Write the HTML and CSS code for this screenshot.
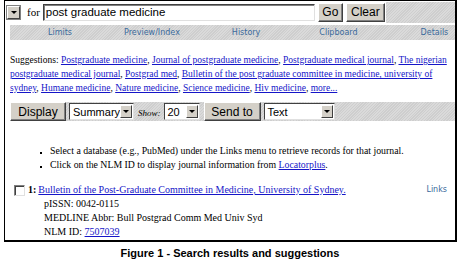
FILE: index.html
```html
<!DOCTYPE html>
<html lang="en">
<head>
    <meta charset="UTF-8">
    <title>Journals search</title>
    <link rel="stylesheet" href="styles.css">
</head>
<body>
    <div class="frame">
        <div class="search-row">
            <span class="db-select"><span class="arrow"></span></span>
            <span class="for-label">for</span>
            <span class="search-input">post graduate medicine</span>
            <span class="btn go-btn">Go</span>
            <span class="btn clear-btn">Clear</span>
            <span class="filler"></span>
        </div>

        <div class="tabs">
            <a class="tab" href="#">Limits</a>
            <a class="tab" href="#">Preview/Index</a>
            <a class="tab" href="#">History</a>
            <a class="tab" href="#">Clipboard</a>
            <a class="tab" href="#">Details</a>
        </div>

        <p class="suggestions">
            Suggestions: <a href="#">Postgraduate medicine</a>, <a href="#">Journal of postgraduate medicine</a>, <a href="#">Postgraduate medical journal</a>, <a href="#">The nigerian postgraduate medical journal</a>, <a href="#">Postgrad med</a>, <a href="#">Bulletin of the post graduate committee in medicine, university of sydney</a>, <a href="#">Humane medicine</a>, <a href="#">Nature medicine</a>, <a href="#">Science medicine</a>, <a href="#">Hiv medicine</a>, <a href="#">more...</a>
        </p>

        <div class="display-bar">
            <span class="btn display-btn">Display</span>
            <span class="select summary-select">Summary<span class="arrow-box"><span class="arrow"></span></span></span>
            <span class="show-label">Show:</span>
            <span class="select show-select">20<span class="arrow-box"><span class="arrow"></span></span></span>
            <span class="btn send-btn">Send to</span>
            <span class="select text-select">Text<span class="arrow-box"><span class="arrow"></span></span></span>
            <span class="filler"></span>
        </div>

        <ul class="hints">
            <li>Select a database (e.g., PubMed) under the Links menu to retrieve records for that journal.</li>
            <li>Click on the NLM ID to display journal information from <a href="#">Locatorplus</a>.</li>
        </ul>

        <div class="result">
            <div class="result-head">
                <span class="checkbox"></span>
                <b class="num">1:</b>
                <a class="title" href="#">Bulletin of the Post-Graduate Committee in Medicine, University of Sydney.</a>
                <a class="links" href="#">Links</a>
            </div>
            <div class="result-body">
                <div>pISSN: 0042-0115</div>
                <div>MEDLINE Abbr: Bull Postgrad Comm Med Univ Syd</div>
                <div>NLM ID: <a href="#">7507039</a></div>
            </div>
        </div>
    </div>
    <p class="caption">Figure 1 - Search results and suggestions</p>
</body>
</html>
```

FILE: styles.css
```css
:root {
    --hatch: repeating-linear-gradient(135deg, #dadada 0 1px, #cecece 1px 2px);
    --link: #1515c8;
    --tab-link: #3a6a9c;
    --btn-bg: #d4d0c8;
}

body {
    margin: 0;
    padding: 0 0 0 4px;
    background: #fff;
    font-family: 'Liberation Serif', serif;
    font-size: 10px;
    color: #000;
}

a {
    color: var(--link);
}

.frame {
    width: 450px;
    height: 239px;
    border: 1px solid #000;
    border-width: 1px 2px 2px 1px;
}

.search-row {
    display: flex;
    align-items: center;
    height: 22px;
    padding-left: 1px;
}

.db-select {
    width: 11px;
    height: 11px;
    margin-left: 1px;
    border: 1px solid;
    border-color: #fff #404040 #404040 #fff;
    background: var(--btn-bg);
    display: flex;
    align-items: center;
    justify-content: center;
    box-shadow: 0 0 0 1px #808080;
}

.arrow {
    width: 0;
    height: 0;
    border-left: 3px solid transparent;
    border-right: 3px solid transparent;
    border-top: 3px solid #000;
}

.for-label {
    margin-left: 7px;
    font-size: 11px;
}

.search-input {
    margin-left: 3px;
    width: 268px;
    height: 15px;
    border: 1px solid;
    border-color: #404040 #e0e0e0 #e0e0e0 #404040;
    box-shadow: inset 1px 1px 0 #808080;
    padding-left: 2px;
    font-family: 'Liberation Sans', sans-serif;
    font-size: 11.5px;
    line-height: 15px;
}

.btn {
    background: var(--btn-bg);
    border: 1px solid;
    border-color: #fff #404040 #404040 #fff;
    box-shadow: inset -1px -1px 0 #808080;
    font-family: 'Liberation Sans', sans-serif;
    font-size: 12px;
    display: flex;
    align-items: center;
    justify-content: center;
}

.go-btn {
    margin-left: 3px;
    width: 23px;
    height: 17px;
}

.clear-btn {
    margin-left: 3px;
    width: 37px;
    height: 17px;
}

.filler {
    flex: 1;
    align-self: stretch;
    background: var(--hatch);
}

.search-row .filler {
    margin: 1px 0 0 1px;
}

.tabs {
    margin: 2px 0 0 5px;
    height: 15px;
    background: var(--hatch);
    display: flex;
    align-items: center;
    font-family: 'DejaVu Sans', sans-serif;
    font-size: 8px;
}

.tab {
    color: var(--tab-link);
    text-decoration: none;
}

.tab:nth-child(1) { margin-left: 38px; }
.tab:nth-child(2) { margin-left: 52px; }
.tab:nth-child(3) { margin-left: 52px; }
.tab:nth-child(4) { margin-left: 59px; }
.tab:nth-child(5) { margin-left: 63px; }

.suggestions {
    margin: 13px 4px 0 5px;
    font-size: 9.5px;
    line-height: 14px;
}

.display-bar {
    margin: 7px 0 0 5px;
    height: 19px;
    background: var(--hatch);
    display: flex;
    align-items: center;
}

.display-btn {
    width: 54px;
    height: 17px;
}

.select {
    display: flex;
    align-items: center;
    justify-content: space-between;
    height: 17px;
    background: #fff;
    border: 1px solid;
    border-color: #404040 #e0e0e0 #e0e0e0 #404040;
    font-family: 'Liberation Sans', sans-serif;
    font-size: 11px;
    padding: 0 1px 0 3px;
    box-sizing: border-box;
}

.arrow-box {
    width: 12px;
    height: 13px;
    background: var(--btn-bg);
    border: 1px solid;
    border-color: #fff #404040 #404040 #fff;
    display: flex;
    align-items: center;
    justify-content: center;
    box-sizing: border-box;
}

.summary-select {
    margin-left: 3px;
    width: 65px;
}

.show-label {
    margin: 3px 3px 0 4px;
    font-size: 9px;
    font-style: italic;
}

.show-select {
    width: 36px;
}

.send-btn {
    margin-left: 4px;
    width: 55px;
    height: 17px;
}

.text-select {
    margin-left: 3px;
    width: 71px;
}

.display-bar .filler {
    margin-left: 1px;
}

.hints {
    margin: 23px 0 0 0;
    padding-left: 45px;
    list-style: square;
    font-size: 9.8px;
    line-height: 14px;
}

.hints li::marker {
    font-size: 6px;
}

.result {
    margin-top: 11px;
    line-height: 14px;
}

.result-head {
    display: flex;
    align-items: center;
    padding-left: 9px;
}

.checkbox {
    width: 9px;
    height: 9px;
    border: 1px solid;
    border-color: #808080 #e0e0e0 #e0e0e0 #808080;
    box-shadow: inset 1px 1px 0 #404040;
    margin-right: 3px;
}

.num {
    margin-right: 2px;
}

.links {
    margin-left: auto;
    margin-right: 8px;
    color: var(--tab-link);
    text-decoration: none;
    font-family: 'DejaVu Sans', sans-serif;
    font-size: 8px;
}

.result-body {
    padding-left: 39px;
}

.caption {
    margin: 5px 0 0 0;
    text-align: center;
    width: 452px;
    font-family: 'Liberation Sans', sans-serif;
    font-weight: bold;
    font-size: 11px;
}
```
